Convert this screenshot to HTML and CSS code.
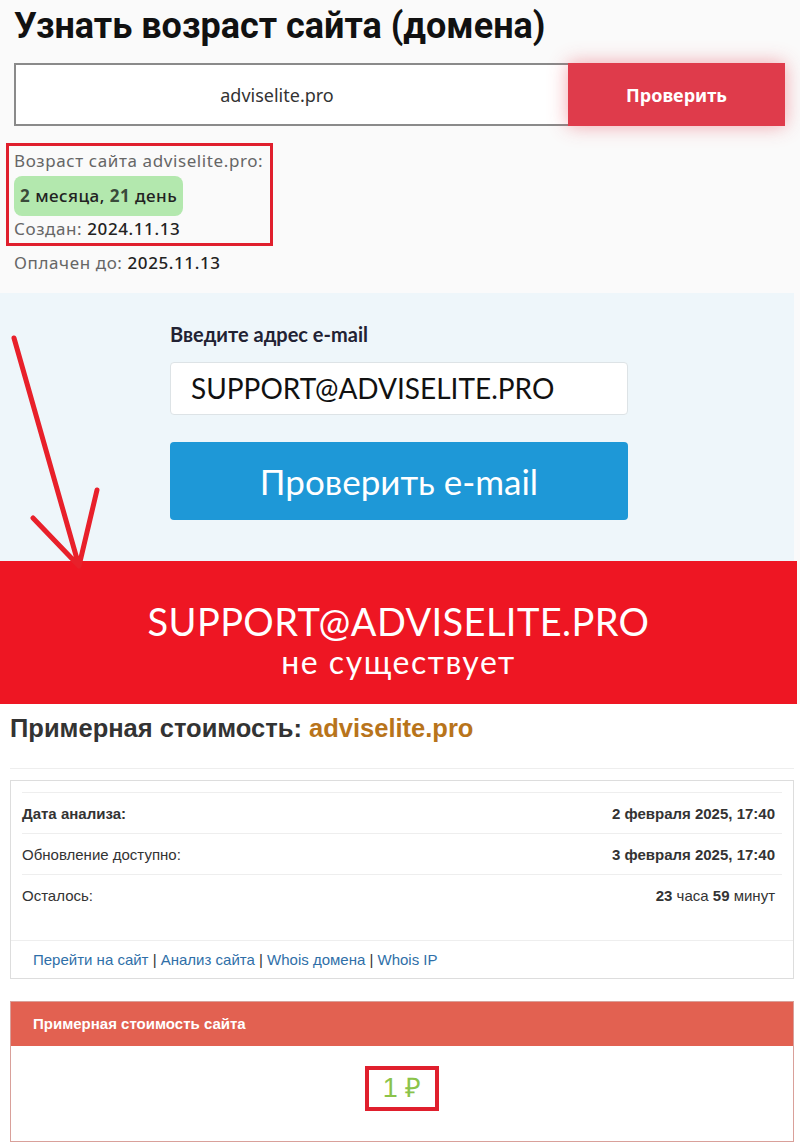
FILE: index.html
```html
<!DOCTYPE html>
<html lang="ru">
<head>
    <meta charset="UTF-8">
    <meta name="viewport" content="width=device-width, initial-scale=1.0">
    <title>Узнать возраст сайта</title>
    <link rel="stylesheet" href="styles.css">
</head>
<body>
    <div class="age-section">
        <h1 class="title">Узнать возраст сайта (домена)</h1>

        <div class="check-form">
            <div class="domain-input">adviselite.pro</div>
            <button class="check-btn">Проверить</button>
        </div>

        <div class="age-result">
            <div class="age-line">Возраст сайта adviselite.pro:</div>
            <div class="age-pill"><b>2</b> месяца, <b>21</b> день</div>
            <div class="age-line">Создан: <span class="val">2024.11.13</span></div>
        </div>
        <div class="age-line paid">Оплачен до: <span class="val">2025.11.13</span></div>
    </div>

    <div class="email-section">
        <div class="email-form">
            <div class="email-label">Введите адрес e-mail</div>
            <div class="email-input">SUPPORT@ADVISELITE.PRO</div>
            <button class="email-btn">Проверить e-mail</button>
        </div>
        <svg class="arrow" width="110" height="260" viewBox="0 0 110 260">
            <path d="M14 18 L79 246 M33 198 L79 246 L97 170" fill="none" stroke="#e8202a" stroke-width="5" stroke-linecap="round" stroke-linejoin="round"/>
        </svg>
    </div>

    <div class="email-banner">
        <div class="banner-email">SUPPORT@ADVISELITE.PRO</div>
        <div class="banner-status">не существует</div>
    </div>

    <div class="cost-section">
        <h2 class="cost-title">Примерная стоимость: <span class="domain">adviselite.pro</span></h2>

        <div class="panel">
            <table class="info-table">
                <tr>
                    <td><b>Дата анализа:</b></td>
                    <td class="right"><b>2 февраля 2025, 17:40</b></td>
                </tr>
                <tr>
                    <td>Обновление доступно:</td>
                    <td class="right"><b>3 февраля 2025, 17:40</b></td>
                </tr>
                <tr>
                    <td>Осталось:</td>
                    <td class="right"><b>23</b> часа <b>59</b> минут</td>
                </tr>
            </table>
            <div class="panel-footer">
                <a href="#">Перейти на сайт</a> | <a href="#">Анализ сайта</a> | <a href="#">Whois домена</a> | <a href="#">Whois IP</a>
            </div>
        </div>

        <div class="price-panel">
            <div class="price-heading">Примерная стоимость сайта</div>
            <div class="price-body">
                <span class="price">1 ₽</span>
            </div>
        </div>
    </div>
</body>
</html>
```

FILE: styles.css
```css
* {
    margin: 0;
    padding: 0;
    box-sizing: border-box;
}

body {
    background: #fafafa;
    font-family: 'Noto Sans', sans-serif;
    width: 800px;
}

/* age check */

.age-section {
    padding: 5px 0 17px 14px;
}

.title {
    font-family: Roboto, sans-serif;
    font-size: 36px;
    font-weight: 700;
    color: #111;
    line-height: 42px;
    margin-bottom: 16px;
}

.check-form {
    display: flex;
    height: 63px;
    width: 771px;
}

.domain-input {
    flex: 1;
    border: 2px solid #8a8a8a;
    border-right: none;
    background: #fff;
    display: flex;
    align-items: center;
    justify-content: center;
    padding-right: 30px;
    font-size: 18px;
    color: #333;
}

.check-btn {
    width: 217px;
    border: none;
    background: #df3b4b;
    color: #fff;
    font-family: 'Noto Sans', sans-serif;
    font-size: 18px;
    font-weight: 700;
    box-shadow: 0 0 18px rgba(230, 60, 75, 0.45);
}

.age-result {
    margin: 17px 0 0 -8px;
    width: 267px;
    border: 3px solid #e01f2d;
    padding: 2px 5px 1px 5px;
}

.age-line {
    font-size: 17px;
    letter-spacing: 0.6px;
    color: #666;
    line-height: 26px;
}

.val {
    color: #222;
    font-weight: 500;
}

.age-pill {
    display: inline-block;
    background: #b3e8ae;
    border-radius: 8px;
    padding: 0 6px;
    height: 40px;
    line-height: 40px;
    font-size: 17px;
    letter-spacing: 0.5px;
    font-weight: 500;
    color: #222;
    margin: 2px 0 0;
}

.age-pill b {
    color: #3a4a3a;
}

.paid {
    margin-top: 4px;
}

/* email check */

.email-section {
    position: relative;
    width: 794px;
    height: 268px;
    background: #eef6fa;
    padding: 29px 0 0 170px;
}

.email-label {
    font-family: Lato, sans-serif;
    font-size: 20px;
    font-weight: 700;
    color: #223;
    margin-bottom: 16px;
}

.email-input {
    width: 458px;
    height: 53px;
    background: #fff;
    border: 1px solid #dde3e6;
    border-radius: 4px;
    font-family: Lato, sans-serif;
    font-size: 28px;
    color: #111;
    line-height: 51px;
    padding-left: 20px;
    margin-bottom: 27px;
}

.email-btn {
    width: 458px;
    height: 78px;
    border: none;
    border-radius: 4px;
    background: #1e98d7;
    color: #fff;
    font-family: Lato, sans-serif;
    font-size: 35px;
}

.arrow {
    position: absolute;
    left: 0;
    top: 27px;
    z-index: 2;
}

.email-banner {
    width: 797px;
    height: 143px;
    background: #ee1623;
    color: #fff;
    font-family: Lato, sans-serif;
    text-align: center;
    padding-top: 38px;
}

.banner-email {
    font-size: 38px;
    letter-spacing: 0.4px;
    line-height: 44px;
}

.banner-status {
    font-size: 32px;
    letter-spacing: 1.5px;
    line-height: 38px;
}

/* cost */

.cost-section {
    background: #fff;
    padding: 8px 6px 7px 10px;
    font-family: 'Liberation Sans', Arial, sans-serif;
}

.cost-title {
    font-size: 25.5px;
    font-weight: 700;
    color: #333;
    line-height: 32px;
    padding-bottom: 24px;
    border-bottom: 1px solid #eee;
    margin-bottom: 11px;
}

.domain {
    color: #b8741b;
}

.panel {
    border: 1px solid #ddd;
    padding: 11px 11px 0;
    margin-bottom: 22px;
}

.info-table {
    width: 100%;
    border-collapse: collapse;
    font-size: 15px;
    color: #333;
    margin-bottom: 24px;
}

.info-table td {
    border-top: 1px solid #eee;
    height: 41px;
}

.info-table .right {
    text-align: right;
    padding-right: 7px;
}

.panel-footer {
    border-top: 1px solid #eee;
    margin: 0 -11px;
    padding: 10px 22px 10px;
    font-size: 15px;
    color: #333;
}

.panel-footer a {
    color: #2f6fa8;
    text-decoration: none;
}

.price-panel {
    border: 1px solid #d9a09a;
}

.price-heading {
    background: #e26151;
    color: #fff;
    font-size: 15px;
    font-weight: 700;
    height: 44px;
    line-height: 44px;
    padding-left: 22px;
}

.price-body {
    background: #fff;
    height: 95px;
    display: flex;
    justify-content: center;
    align-items: center;
}

.price {
    display: inline-block;
    border: 4px solid #e01f2d;
    color: #8bc34a;
    font-size: 27px;
    line-height: 30px;
    padding: 3px 14px 4px;
    margin-bottom: 10px;
}
```
